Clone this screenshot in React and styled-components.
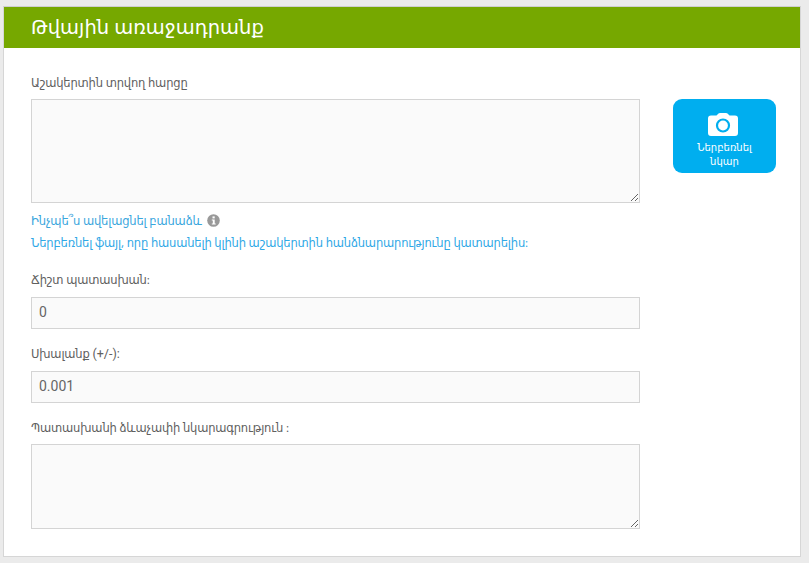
import React from "react";
import styled, { createGlobalStyle } from "styled-components";

const Global = createGlobalStyle`
  html, body { margin: 0; padding: 0; background: #ebebeb; }
  body { width: 809px; height: 563px; overflow: hidden; font-family: "Noto Sans", "DejaVu Sans", sans-serif; }
`;

const Panel = styled.main`
  box-sizing: border-box;
  width: 798px;
  height: 551px;
  margin: 6px 0 0 3px;
  background: #fff;
  border: 1px solid #d6d6d6;
  border-top-color: #cfcfcf;
`;

const Header = styled.header`
  height: 41px;
  background: #76a800;
  color: #fff;
  font-size: 19.5px;
  line-height: 40px;
  padding-left: 27px;
`;

const Body = styled.div`
  display: flex;
  align-items: flex-start;
  padding: 27px 0 0 27px;
`;

const Form = styled.div`
  width: 609px;
  display: flex;
  flex-direction: column;
`;

const Side = styled.div`
  margin: 24px 0 0 33px;
`;

const Label = styled.label`
  display: block;
  font-size: 11.5px;
  letter-spacing: -0.17px;
  line-height: 16px;
  color: #606060;
  margin-top: ${(p) => p.$top || 0}px;
  margin-bottom: ${(p) => p.$bottom || 9}px;
`;

const Latin = styled.span`
  font-family: Roboto, sans-serif;
  font-size: 12.5px;
  letter-spacing: 0;
`;

const Area = styled.textarea`
  display: block;
  box-sizing: border-box;
  width: 609px;
  height: ${(p) => p.$h}px;
  margin: 0;
  padding: 6px 8px;
  background: #fafafa;
  border: 1px solid #d4d4d4;
  border-radius: 0;
  outline: none;
`;

const Input = styled.input`
  display: block;
  box-sizing: border-box;
  width: 609px;
  height: 32px;
  margin: 0;
  padding: 0 7px 2px;
  background: #fafafa;
  border: 1px solid #d4d4d4;
  border-radius: 0;
  outline: none;
  color: #666;
  font-family: Roboto, sans-serif;
  font-size: 14px;
`;

const HelpRow = styled.div`
  display: flex;
  align-items: center;
  gap: 5px;
  margin-top: 9px;
  height: 16px;
  font-size: 11.5px;
  letter-spacing: -0.17px;
  color: #3aa6dd;
`;

const Note = styled.p`
  margin: 7px 0 0;
  font-size: 11.5px;
  letter-spacing: -0.17px;
  line-height: 16px;
  color: #2fa8e6;
`;

const Upload = styled.button`
  width: 103px;
  height: 74px;
  border: 0;
  border-radius: 9px;
  background: #00aeef;
  color: #fff;
  font-family: inherit;
  font-size: 10px;
  line-height: 14px;
  padding: 13px 0 0;
  display: flex;
  flex-direction: column;
  align-items: center;
`;

const CameraIcon = styled.svg`
  display: block;
  margin-right: 3px;
`;

const UploadText = styled.span`
  display: block;
  width: 70px;
  margin-top: 4px;
  text-align: center;
`;

const Info = () => (
  <svg width="13" height="13" viewBox="0 0 13 13">
    <circle cx="6.5" cy="6.5" r="6.3" fill="#999" />
    <rect x="5.5" y="2.4" width="2.2" height="2" fill="#fff" />
    <path d="M4.8 5.4h2.9v4h1v1.2H4.8V9.4h1V6.6h-1z" fill="#fff" />
  </svg>
);

const Camera = () => (
  <CameraIcon width="30" height="24" viewBox="0 0 30 24">
    <path
      d="M3 3.5h5.5L10.500 1.600Q11 1 12 1h6q1 0 1.500.6L21.500 3.500H27q3 0 3 3V21q0 3-3 3H3q-3 0-3-3V6.500q0-3 3-3z"
      fill="#fff"
    />
    <circle cx="15" cy="13.500" r="6" fill="none" stroke="#00aeef" strokeWidth="2.200" />
  </CameraIcon>
);

export default function App() {
  return (
    <>
      <Global />
      <Panel>
        <Header>Թվային առաջադրանք</Header>
        <Body>
          <Form>
            <Label $bottom={8}>Աշակերտին տրվող հարցը</Label>
            <Area $h={104} />
            <HelpRow>
              Ինչպե՞ս ավելացնել բանաձև <Info />
            </HelpRow>
            <Note>Ներբեռնել ֆայլ, որը հասանելի կլինի աշակերտին հանձնարարությունը կատարելիս:</Note>
            <Label $top={21}>Ճիշտ պատասխան:</Label>
            <Input readOnly value="0" />
            <Label $top={17}>
              Սխալանք <Latin>(+/-):</Latin>
            </Label>
            <Input readOnly value="0.001" />
            <Label $top={17} $bottom={8}>Պատասխանի ձևաչափի նկարագրություն :</Label>
            <Area $h={85} />
          </Form>
          <Side>
            <Upload>
              <Camera />
              <UploadText>Ներբեռնել նկար</UploadText>
            </Upload>
          </Side>
        </Body>
      </Panel>
    </>
  );
}
